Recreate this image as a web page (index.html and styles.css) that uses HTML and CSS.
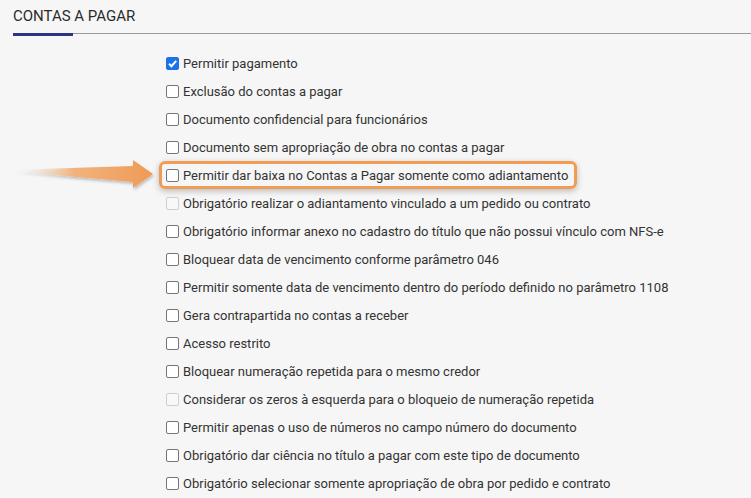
FILE: index.html
```html
<!DOCTYPE html>
<html lang="pt-BR">
<head>
<meta charset="utf-8">
<link rel="stylesheet" href="styles.css">
</head>
<body>
<div class="page">
  <div class="tabs">
    <div class="tab">CONTAS A PAGAR</div>
  </div>
  <ul class="options">
    <li class="opt"><span class="cb checked"><svg viewBox="0 0 13 13" width="13" height="13"><path d="M3 6.8 L5.4 9.2 L10.2 3.8" fill="none" stroke="#fff" stroke-width="2"/></svg></span>Permitir pagamento</li>
    <li class="opt"><span class="cb"></span>Exclusão do contas a pagar</li>
    <li class="opt"><span class="cb"></span>Documento confidencial para funcionários</li>
    <li class="opt"><span class="cb"></span>Documento sem apropriação de obra no contas a pagar</li>
    <li class="opt highlight"><span class="cb"></span>Permitir dar baixa no Contas a Pagar somente como adiantamento</li>
    <li class="opt"><span class="cb disabled"></span>Obrigatório realizar o adiantamento vinculado a um pedido ou contrato</li>
    <li class="opt"><span class="cb"></span>Obrigatório informar anexo no cadastro do título que não possui vínculo com NFS-e</li>
    <li class="opt"><span class="cb"></span>Bloquear data de vencimento conforme parâmetro 046</li>
    <li class="opt"><span class="cb"></span>Permitir somente data de vencimento dentro do período definido no parâmetro 1108</li>
    <li class="opt"><span class="cb"></span>Gera contrapartida no contas a receber</li>
    <li class="opt"><span class="cb"></span>Acesso restrito</li>
    <li class="opt"><span class="cb"></span>Bloquear numeração repetida para o mesmo credor</li>
    <li class="opt"><span class="cb disabled"></span>Considerar os zeros à esquerda para o bloqueio de numeração repetida</li>
    <li class="opt"><span class="cb"></span>Permitir apenas o uso de números no campo número do documento</li>
    <li class="opt"><span class="cb"></span>Obrigatório dar ciência no título a pagar com este tipo de documento</li>
    <li class="opt"><span class="cb"></span>Obrigatório selecionar somente apropriação de obra por pedido e contrato</li>
  </ul>
  <svg class="arrow" width="160" height="40" viewBox="0 0 160 40">
    <defs>
      <linearGradient id="g" x1="0" y1="0" x2="1" y2="0">
        <stop offset="0" stop-color="#f6f6f6" stop-opacity="0"/>
        <stop offset="0.45" stop-color="#f2b27c"/>
        <stop offset="1" stop-color="#ee9b55"/>
      </linearGradient>
      <filter id="s" x="-10%" y="-30%" width="120%" height="160%">
        <feGaussianBlur in="SourceAlpha" stdDeviation="1.5"/>
        <feOffset dx="1" dy="2"/>
        <feComponentTransfer><feFuncA type="linear" slope="0.25"/></feComponentTransfer>
        <feMerge><feMergeNode/><feMergeNode in="SourceGraphic"/></feMerge>
      </filter>
    </defs>
    <path d="M10 14 L133 10 L133 4 L153 18 L133 32 L133 26 L10 15 Z" fill="url(#g)" filter="url(#s)"/>
  </svg>
</div>
</body>
</html>
```
FILE: styles.css
```css
html, body {
  margin: 0;
  padding: 0;
  background: #f6f6f6;
}
body {
  font-family: Roboto, "Liberation Sans", Arial, sans-serif;
  color: #333;
}
.page {
  position: relative;
  width: 751px;
  height: 498px;
  overflow: hidden;
}
.tabs {
  margin-left: 13px;
  border-bottom: 1px solid #9a9a9a;
  height: 33px;
  display: flex;
  align-items: flex-end;
}
.tab {
  font-size: 15px;
  line-height: 18px;
  color: #2b2b2b;
  padding-bottom: 8px;
  position: relative;
  width: 60px;
  white-space: nowrap;
}
.tab::after {
  content: "";
  position: absolute;
  left: 0;
  bottom: -3px;
  width: 60px;
  height: 3px;
  background: #2b3483;
}
.options {
  list-style: none;
  margin: 15px 0 0 166px;
  padding: 0;
}
.opt {
  position: relative;
  display: flex;
  align-items: center;
  height: 28px;
  font-size: 13px;
  color: #333;
  white-space: nowrap;
  width: max-content;
}
.cb {
  box-sizing: border-box;
  width: 13px;
  height: 13px;
  border: 1px solid #767676;
  border-radius: 2px;
  background: #fff;
  margin-right: 4px;
  display: inline-flex;
  flex: none;
}
.cb svg { display: block; margin: -1px; }
.cb.checked {
  background: #1a73e8;
  border-color: #1a73e8;
}
.cb.disabled {
  border-color: #cfcfcf;
  background: #f8f8f8;
}
.highlight::before {
  content: "";
  position: absolute;
  left: -7px;
  right: -9px;
  top: 0;
  bottom: 0;
  border: 3px solid #f19c55;
  border-radius: 6px;
  box-shadow: 0 2px 6px rgba(0,0,0,0.25);
  pointer-events: none;
}
.arrow {
  position: absolute;
  left: 0;
  top: 156px;
}
```
